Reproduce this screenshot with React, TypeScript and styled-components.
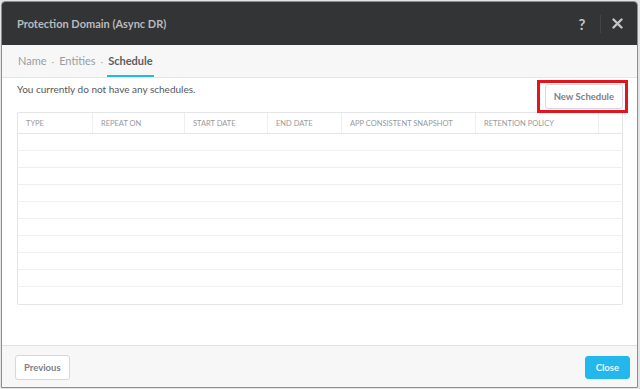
import React from 'react'
import styled, {createGlobalStyle} from 'styled-components'

const GlobalStyle = createGlobalStyle`
  html, body {
    margin: 0;
    padding: 0;
    background: #e4e4e4;
    font-family: Lato, "Open Sans", "Liberation Sans", sans-serif;
  }
  * {
    box-sizing: border-box;
  }
`

const Page = styled.div`
  width: 640px;
  height: 389px;
  padding: 1px 2px 1px 1px;
`

const Modal = styled.div`
  height: 100%;
  display: flex;
  flex-direction: column;
  border: 1px solid #8e8e8e;
  border-radius: 4px 4px 0 0;
  background: #fff;
  overflow: hidden;
`

const Header = styled.div`
  height: 43px;
  flex: none;
  display: flex;
  align-items: center;
  padding: 0 12px 0 15px;
  background: #333436;
`

const Title = styled.div`
  flex: 1;
  color: #b9babd;
  font-size: 11px;
  font-weight: 700;
`

const HeaderIcon = styled.span`
  width: 16px;
  display: flex;
  justify-content: center;
  color: #c4c5c7;
  font-size: 15px;
  font-weight: 700;
`

const HeaderDivider = styled.span`
  width: 1px;
  height: 18px;
  margin: 0 8px 0 10px;
  background: #444547;
`

const Tabs = styled.div`
  height: 33px;
  flex: none;
  display: flex;
  align-items: stretch;
  padding: 0 15px;
  background: #f7f7f8;
  border-bottom: 1px solid #e6e6e8;
`

const Tab = styled.span<{$active?: boolean}>`
  display: flex;
  align-items: center;
  padding: 1px 1px 0;
  font-size: 11px;
  font-weight: ${p => (p.$active ? 700 : 400)};
  color: ${p => (p.$active ? '#5b5d62' : '#9a9ca1')};
  border-bottom: 2px solid ${p => (p.$active ? '#27b6e8' : 'transparent')};
`

const Dot = styled.span`
  display: flex;
  align-items: center;
  padding: 0 4px;
  font-size: 10px;
  color: #b0b2b6;
`

const Body = styled.div`
  flex: 1;
  padding: 2px 9px 0 15px;
`

const TopRow = styled.div`
  display: flex;
  justify-content: space-between;
  align-items: flex-start;
`

const Message = styled.div`
  margin-top: 3px;
  font-size: 10px;
  color: #55575c;
`

const Highlight = styled.div`
  border: 3px solid #e3141b;
  padding: 1px 2px 1px 5px;
`

const Button = styled.button<{$primary?: boolean}>`
  height: ${p => (p.$primary ? 23 : 25)}px;
  padding: 0 ${p => (p.$primary ? 10 : 8)}px;
  border-radius: 3px;
  font-family: inherit;
  font-size: 9.5px;
  font-weight: 700;
  border: 1px solid ${p => (p.$primary ? '#23b8ec' : '#d7d8db')};
  background: ${p => (p.$primary ? '#23b8ec' : '#fff')};
  color: ${p => (p.$primary ? '#e8f7fd' : '#7d7f84')};
`

const Table = styled.div`
  width: 606px;
  margin-top: -1px;
  border: 1px solid #e4e5e7;
  border-radius: 2px;
`

const cols = '74px 92px 83px 74px 134px 123px 1fr'

const HeadRow = styled.div`
  display: grid;
  grid-template-columns: ${cols};
  height: 21px;
  border-bottom: 1px solid #e4e5e7;
`

const HeadCell = styled.div`
  display: flex;
  align-items: center;
  padding-left: 8px;
  font-size: 7.5px;
  color: #97999e;
  text-transform: uppercase;
  border-left: 1px solid #eeeff0;
  &:first-child {
    border-left: none;
  }
`

const Row = styled.div`
  height: 17px;
  border-bottom: 1px solid #f0f0f2;
  &:last-child {
    border-bottom: none;
  }
`

const Footer = styled.div`
  height: 42px;
  flex: none;
  display: flex;
  justify-content: space-between;
  align-items: center;
  padding: 1px 7px 0 13px;
  background: #f7f7f8;
  border-top: 1px solid #dfe0e2;
`

const headers = [
  'Type',
  'Repeat On',
  'Start Date',
  'End Date',
  'App Consistent Snapshot',
  'Retention Policy',
  '',
]

export default function App() {
  return (
    <Page>
      <GlobalStyle />
      <Modal>
        <Header>
          <Title>Protection Domain (Async DR)</Title>
          <HeaderIcon>?</HeaderIcon>
          <HeaderDivider />
          <HeaderIcon>
            <svg width="11" height="11" viewBox="0 0 11 11">
              <path
                d="M1.5 1.5 L9.5 9.5 M9.5 1.5 L1.5 9.5"
                stroke="#c4c5c7"
                strokeWidth="2.4"
                strokeLinecap="round"
              />
            </svg>
          </HeaderIcon>
        </Header>
        <Tabs>
          <Tab>Name</Tab>
          <Dot>·</Dot>
          <Tab>Entities</Tab>
          <Dot>·</Dot>
          <Tab $active>Schedule</Tab>
        </Tabs>
        <Body>
          <TopRow>
            <Message>You currently do not have any schedules.</Message>
            <Highlight>
              <Button>New Schedule</Button>
            </Highlight>
          </TopRow>
          <Table>
            <HeadRow>
              {headers.map((h, i) => (
                <HeadCell key={i}>{h}</HeadCell>
              ))}
            </HeadRow>
            {Array.from({length: 10}).map((_, i) => (
              <Row key={i} />
            ))}
          </Table>
        </Body>
        <Footer>
          <Button>Previous</Button>
          <Button $primary>Close</Button>
        </Footer>
      </Modal>
    </Page>
  )
}
